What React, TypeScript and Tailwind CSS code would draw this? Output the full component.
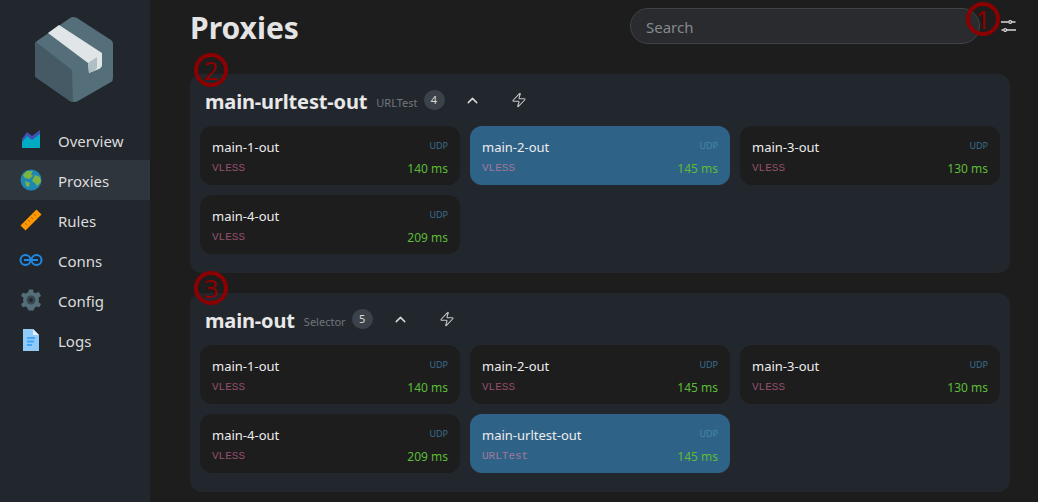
import { ChevronUp, Zap } from 'lucide-react';

type Proxy = { name: string; kind: string; delay: number; active?: boolean };

const first: Proxy[] = [
  { name: 'main-1-out', kind: 'VLESS', delay: 140 },
  { name: 'main-2-out', kind: 'VLESS', delay: 145, active: true },
  { name: 'main-3-out', kind: 'VLESS', delay: 130 },
  { name: 'main-4-out', kind: 'VLESS', delay: 209 },
];

const second: Proxy[] = [
  { name: 'main-1-out', kind: 'VLESS', delay: 140 },
  { name: 'main-2-out', kind: 'VLESS', delay: 145 },
  { name: 'main-3-out', kind: 'VLESS', delay: 130 },
  { name: 'main-4-out', kind: 'VLESS', delay: 209 },
  { name: 'main-urltest-out', kind: 'URLTest', delay: 145, active: true },
];

function BoxLogo() {
  return (
    <svg width="80" height="88" viewBox="0 0 80 88">
      <path d="M35 2 Q38 0 42 2 L76 24 Q78 25 78 28 L78 62 Q78 65 76 66 L43 85 Q39 87 35 85 L2 62 Q0 61 0 58 L0 28 Q0 26 2 25 Z" fill="#546e7a" />
      <path d="M1 26 L37 54 L38 86 Q36 86 35 85 L2 62 Q0 61 0 58 L0 28 Z" fill="#455a64" />
      <path d="M13 17 L24 9 L67 37 L67 50 Q66 52 64 53 L54 57 L53 47 Z" fill="#e0e6e8" />
      <path d="M53 47 L62 41 L62 52 Q61 53 60 54 L54 57 Z" fill="#b0bec5" />
    </svg>
  );
}

function OverviewIcon() {
  return (
    <svg width="20" height="20" viewBox="0 0 20 20">
      <path d="M1 9 L6 2 L11 6 L19 0 L19 12 L1 14 Z" fill="#3f51b5" />
      <path d="M1 12 L6 6 L11 10 L19 4 L19 18 L1 18 Z" fill="#00acc1" />
    </svg>
  );
}

function GlobeIcon() {
  return (
    <svg width="22" height="22" viewBox="0 0 22 22">
      <circle cx="11" cy="11" r="10.5" fill="#1e88b5" />
      <path d="M7 2 L13 2 L11 5 L13 7 L9 10 L5 9 L3 6 Z" fill="#7cb342" />
      <path d="M15 6 L20 8 L21 13 L17 17 L15 14 L12 12 Z" fill="#7cb342" />
      <path d="M5 12 L10 14 L9 18 L6 17 Z" fill="#7cb342" />
    </svg>
  );
}

function RulerIcon() {
  return (
    <svg width="22" height="22" viewBox="0 0 22 22">
      <path d="M16.5 0.5 L21.5 5.5 L5.5 21.5 L0.5 16.5 Z" fill="#ff9800" />
      <path d="M14 5 L16 7 M11 8 L13 10 M8 11 L10 13 M5 14 L7 16" stroke="#b36a00" strokeWidth="1" />
    </svg>
  );
}

function LinkIcon() {
  return (
    <svg width="24" height="12" viewBox="0 0 24 12" fill="none" stroke="#1e88e5" strokeWidth="2">
      <circle cx="6.5" cy="6" r="5" />
      <circle cx="17.5" cy="6" r="5" />
      <path d="M5 6 L19 6" />
    </svg>
  );
}

function GearIcon() {
  return (
    <svg width="22" height="22" viewBox="0 0 22 22">
      <path d="M9 0.5 L13 0.5 L13.6 3.4 L15.8 4.3 L18.3 2.7 L19.3 3.7 L19.3 3.7 L21 7 L18.6 8.6 L18.9 11 L18.6 13.4 L21 15 L19.3 18.3 L16.3 17.6 L14.5 19 L13.6 21.5 L8.4 21.5 L7.5 19 L5.7 17.6 L2.7 18.3 L1 15 L3.4 13.4 L3.1 11 L3.4 8.6 L1 7 L2.7 3.7 L5.7 4.4 L8 3.4 Z" fill="#546e7a" />
      <circle cx="11" cy="11" r="4.5" fill="#37474f" />
      <circle cx="11" cy="11" r="2" fill="#22272e" />
    </svg>
  );
}

function FileIcon() {
  return (
    <svg width="16" height="22" viewBox="0 0 16 22">
      <path d="M0 0 L10 0 L16 6 L16 22 L0 22 Z" fill="#90caf9" />
      <path d="M10 0 L16 6 L10 6 Z" fill="#e3f2fd" />
      <path d="M4 8 L12 8 L12 10 L4 10 Z M4 11.5 L11 11.5 L11 13.5 L4 13.5 Z M4 15 L9 15 L9 17 L4 17 Z" fill="#42a5f5" />
    </svg>
  );
}

function SliderIcon() {
  return (
    <svg width="15" height="12" viewBox="0 0 15 12" fill="none" stroke="#d8d8d8" strokeWidth="1.3">
      <path d="M0 2 H7.5 M11 2 H14.5" />
      <circle cx="9.2" cy="2" r="1.4" />
      <path d="M0.5 10 H2.5 M6 10 H15" />
      <circle cx="4.2" cy="10" r="1.4" />
    </svg>
  );
}

const nav = [
  { label: 'Overview', icon: <OverviewIcon /> },
  { label: 'Proxies', icon: <GlobeIcon />, active: true },
  { label: 'Rules', icon: <RulerIcon /> },
  { label: 'Conns', icon: <LinkIcon /> },
  { label: 'Config', icon: <GearIcon /> },
  { label: 'Logs', icon: <FileIcon /> },
];

function ProxyCard({ proxy }: { proxy: Proxy }) {
  return (
    <div className={`h-[59px] rounded-xl px-3 pt-[11px] ${proxy.active ? 'bg-[#2f6287]' : 'bg-[#1d1d1d]'}`}>
      <div className="flex items-start justify-between">
        <span className="text-[13px] leading-5 text-[#ececec]">{proxy.name}</span>
        <span className={`text-[9px] leading-[18px] ${proxy.active ? 'text-[#4587ab]' : 'text-[#3a6d91]'}`}>UDP</span>
      </div>
      <div className="flex items-center justify-between pt-[1px]">
        <span className={`mt-[-1px] text-[11px] leading-5 font-['Liberation_Mono',monospace] ${proxy.active ? 'text-[#a0789a]' : 'text-[#94506a]'}`}>
          {proxy.kind}
        </span>
        <span className="mt-[1px] text-xs leading-5 text-[#5cbc38]">{proxy.delay} ms</span>
      </div>
    </div>
  );
}

function Group({ name, type, proxies }: { name: string; type: string; proxies: Proxy[] }) {
  return (
    <section className="rounded-xl bg-[#22272e] px-[10px] pb-[19px]">
      <div className="flex h-[52px] items-center pl-[5px] pt-[3px]">
        <h2 className="text-xl leading-7 font-bold tracking-[-0.15px] text-[#e8e8e8]">{name}</h2>
        <span className="ml-[9px] mt-1 text-[11px] text-[#71767c]">{type}</span>
        <span className="ml-[6px] mt-[-3px] flex h-5 w-[21px] items-center justify-center rounded-full bg-[#3c4249] text-[11px] text-[#d8d8d8]">
          {proxies.length}
        </span>
        <ChevronUp className="ml-[19px] mt-[-3px] h-[17px] w-[17px] text-[#d8d8d8]" />
        <Zap className="ml-[30px] mt-[-3px] h-[16px] w-[16px] text-[#c8c8c8]" strokeWidth={1.6} />
      </div>
      <div className="grid grid-cols-3 gap-[10px]">
        {proxies.map((p) => (
          <ProxyCard key={p.name} proxy={p} />
        ))}
      </div>
    </section>
  );
}

function Mark({ n, className }: { n: number; className: string }) {
  return (
    <div className={`absolute flex h-[34px] w-[34px] items-center justify-center rounded-full border-4 border-[#8b0000] text-[26px] leading-none text-[#8b0000] ${className}`}>
      {n}
    </div>
  );
}

export default function App() {
  return (
    <div className="relative flex h-[502px] w-[1038px] overflow-hidden bg-[#1d1d1d] font-['Noto_Sans',sans-serif]">
      <aside className="w-[150px] shrink-0 bg-[#22272e]">
        <div className="flex h-[120px] items-start pl-[35px] pt-[16px]">
          <BoxLogo />
        </div>
        <nav>
          {nav.map((item) => (
            <div key={item.label} className={`flex h-10 items-center ${item.active ? 'bg-[#2e353d]' : ''}`}>
              <span className="flex w-[58px] justify-center pl-[6px] pr-[2px]">{item.icon}</span>
              <span className="pt-[2px] text-[15px] text-[#dcdcdc]">{item.label}</span>
            </div>
          ))}
        </nav>
      </aside>

      <main className="flex-1 pl-10 pr-7">
        <header className="flex h-[74px] items-start pt-2">
          <h1 className="text-[30px] leading-10 font-bold text-[#e4e4e4]">Proxies</h1>
          <div className="ml-auto flex items-center">
            <div className="flex h-9 w-[350px] items-center rounded-full border border-[#3e4349] bg-[#2a2b2e] pl-[15px] pt-[2px] text-[15px] text-[#85888c]">
              Search
            </div>
            <span className="ml-[21px] mr-[-6px] mt-[-1px]">
              <SliderIcon />
            </span>
          </div>
        </header>
        <div className="flex flex-col gap-5">
          <Group name="main-urltest-out" type="URLTest" proxies={first} />
          <Group name="main-out" type="Selector" proxies={second} />
        </div>
      </main>

      <Mark n={1} className="left-[966px] top-[2px]" />
      <Mark n={2} className="left-[194px] top-[53px]" />
      <Mark n={3} className="left-[194px] top-[271px]" />
    </div>
  );
}
